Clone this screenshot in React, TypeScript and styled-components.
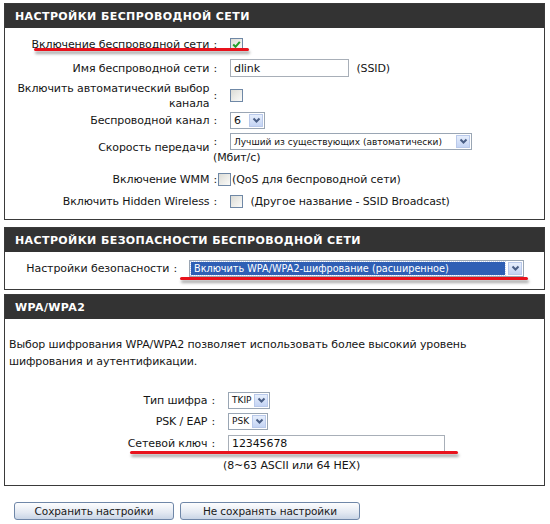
import styled, { createGlobalStyle } from 'styled-components'

const GlobalStyle = createGlobalStyle`
  body {
    margin: 0;
    background: #fff;
    color: #151515;
    font-family: 'DejaVu Sans', Verdana, sans-serif;
    font-size: 11px;
    letter-spacing: -0.1px;
  }
`

const Page = styled.div`
  width: 541px;
  margin: 3px 0 0 4px;
`

const Section = styled.section<{ $gap: number }>`
  border: 1px solid #3a3a3a;
  margin-bottom: ${(p) => p.$gap}px;
`

const SectionTitle = styled.h2`
  margin: 0;
  height: 24px;
  display: flex;
  align-items: center;
  padding-left: 10px;
  background: #333;
  color: #fff;
  font-family: 'DejaVu Sans', Verdana, sans-serif;
  font-size: 11px;
  font-weight: bold;
  letter-spacing: 0.4px;
`

const Body = styled.div<{ $pad: string }>`
  padding: ${(p) => p.$pad};
`

const FieldRow = styled.div<{ $h: number; $label: number; $gap?: number }>`
  position: relative;
  display: grid;
  grid-template-columns: ${(p) => p.$label}px 1fr;
  column-gap: ${(p) => p.$gap ?? 13}px;
  align-items: center;
  height: ${(p) => p.$h}px;
`

const Label = styled.div<{ $top?: number }>`
  display: flex;
  justify-content: flex-end;
  align-items: center;
  align-self: ${(p) => (p.$top !== undefined ? 'start' : 'center')};
  padding-top: ${(p) => p.$top ?? 0}px;
  text-align: right;
  line-height: 15px;
`

const Colon = styled.span<{ $raise?: number }>`
  margin-left: 4px;
  transform: translateY(${(p) => -(p.$raise ?? 0)}px);
`

const Value = styled.div<{ $shift?: number; $column?: boolean; $gap?: number }>`
  display: flex;
  flex-direction: ${(p) => (p.$column ? 'column' : 'row')};
  align-items: ${(p) => (p.$column ? 'flex-start' : 'center')};
  align-self: ${(p) => (p.$column ? 'start' : 'center')};
  padding-top: ${(p) => (p.$column ? 4 : 0)}px;
  margin-left: ${(p) => -(p.$shift ?? 0)}px;
  gap: ${(p) => p.$gap ?? 4}px;
`

const Note = styled.span<{ $shift?: number }>`
  margin-left: ${(p) => -(p.$shift ?? 0)}px;
  line-height: 14px;
`

const Box = styled.span`
  width: 13px;
  height: 13px;
  box-sizing: border-box;
  border: 1px solid #6f88a6;
  background: linear-gradient(135deg, #dcdcd6, #fbfbf9);
  display: inline-flex;
  align-items: center;
  justify-content: center;
  flex-shrink: 0;
`

const TextInput = styled.div<{ $w: number; $h: number }>`
  width: ${(p) => p.$w}px;
  height: ${(p) => p.$h}px;
  box-sizing: border-box;
  border: 1px solid #a8afb8;
  background: #fff;
  padding: 0 3px;
  display: flex;
  align-items: center;
  font-size: 11px;
  color: #111;
`

const SelectBox = styled.div<{ $w: number; $size: number }>`
  width: ${(p) => p.$w}px;
  height: 17px;
  box-sizing: border-box;
  border: 1px solid #9aa6b4;
  background: #fff;
  display: flex;
  align-items: stretch;
  font-size: ${(p) => p.$size}px;
  letter-spacing: 0;
  flex-shrink: 0;
`

const SelectText = styled.span<{ $active?: boolean }>`
  flex: 1;
  display: flex;
  align-items: center;
  padding: 0 3px;
  margin: ${(p) => (p.$active ? '1px 2px 1px 1px' : '0')};
  white-space: nowrap;
  overflow: hidden;
  background: ${(p) => (p.$active ? '#2f5fb5' : 'transparent')};
  color: ${(p) => (p.$active ? '#fff' : '#111')};
  outline: ${(p) => (p.$active ? '1px dotted #c8d4ee' : 'none')};
`

const ArrowButton = styled.span`
  width: 14px;
  margin: 1px;
  box-sizing: border-box;
  border: 1px solid #b9c9ea;
  background: linear-gradient(#e6eefc, #c4d4f4);
  display: flex;
  align-items: center;
  justify-content: center;
`

// red hand-drawn underline laid over a field row
const Mark = styled.span<{ $left: number; $top: number; $width: number }>`
  position: absolute;
  left: ${(p) => p.$left}px;
  top: ${(p) => p.$top}px;
  width: ${(p) => p.$width}px;
  height: 3px;
  border-radius: 2px;
  background: #e8121c;
  box-shadow: 1px 3px 3px rgba(0, 0, 0, 0.35);
  pointer-events: none;
`

const Paragraph = styled.p`
  margin: 0 0 20px;
  line-height: 17px;
`

const Buttons = styled.div`
  display: flex;
  gap: 6px;
  padding: 0 0 0 10px;
`

const Button = styled.button<{ $w: number }>`
  width: ${(p) => p.$w}px;
  height: 18px;
  padding: 0;
  border: 1px solid #6f87a8;
  border-radius: 3px;
  background: linear-gradient(#fdfdfe, #e3e9f2 60%, #c9d5e6);
  font-family: 'DejaVu Sans', Verdana, sans-serif;
  font-size: 10.5px;
  letter-spacing: -0.1px;
  color: #1a1a1a;
`

function Chevron() {
  return (
    <svg width="9" height="7" viewBox="0 0 9 7">
      <polyline points="1.5,1.5 4.5,4.5 7.5,1.5" fill="none" stroke="#4a5f86" strokeWidth="2" />
    </svg>
  )
}

function Select({ w, size, text, active }: { w: number; size: number; text: string; active?: boolean }) {
  return (
    <SelectBox $w={w} $size={size}>
      <SelectText $active={active}>{text}</SelectText>
      <ArrowButton>
        <Chevron />
      </ArrowButton>
    </SelectBox>
  )
}

function Checkbox({ checked }: { checked?: boolean }) {
  return (
    <Box>
      {checked && (
        <svg width="9" height="9" viewBox="0 0 9 9">
          <polyline points="1.2,4.5 3.5,6.8 7.8,1.8" fill="none" stroke="#1f9e2a" strokeWidth="2" />
        </svg>
      )}
    </Box>
  )
}

export default function App() {
  return (
    <Page>
      <GlobalStyle />

      <Section $gap={7}>
        <SectionTitle>НАСТРОЙКИ БЕСПРОВОДНОЙ СЕТИ</SectionTitle>
        <Body $pad="4px 0 7px 0">
          <FieldRow $h={24} $label={212}>
            <Label>
              Включение беспроводной сети<Colon>:</Colon>
            </Label>
            <Value>
              <Checkbox checked />
            </Value>
            <Mark $left={29} $top={16} $width={215} />
          </FieldRow>
          <FieldRow $h={24} $label={212}>
            <Label>
              Имя беспроводной сети<Colon>:</Colon>
            </Label>
            <Value>
              <TextInput $w={119} $h={18}>dlink</TextInput>
              <span>&nbsp;(SSID)</span>
            </Value>
          </FieldRow>
          <FieldRow $h={31} $label={212}>
            <Label>
              <span>
                Включить автоматический выбор
                <br />
                канала
              </span>
              <Colon>:</Colon>
            </Label>
            <Value>
              <Checkbox />
            </Value>
          </FieldRow>
          <FieldRow $h={18} $label={212}>
            <Label>
              Беспроводной канал<Colon>:</Colon>
            </Label>
            <Value>
              <Select w={35} size={11} text="6" />
            </Value>
          </FieldRow>
          <FieldRow $h={39} $label={212}>
            <Label $top={11}>
              Скорость передачи<Colon $raise={6}>:</Colon>
            </Label>
            <Value $column $gap={1}>
              <Select w={242} size={9} text="Лучший из существующих (автоматически)" />
              <Note $shift={17}>(Мбит/с)</Note>
            </Value>
          </FieldRow>
          <FieldRow $h={22} $label={212}>
            <Label>
              Включение WMM<Colon>:</Colon>
            </Label>
            <Value $shift={12} $gap={1}>
              <Checkbox />
              <span>(QoS для беспроводной сети)</span>
            </Value>
          </FieldRow>
          <FieldRow $h={22} $label={212}>
            <Label>
              Включить Hidden Wireless<Colon>:</Colon>
            </Label>
            <Value>
              <Checkbox />
              <span>&nbsp;(Другое название - SSID Broadcast)</span>
            </Value>
          </FieldRow>
        </Body>
      </Section>

      <Section $gap={4}>
        <SectionTitle>НАСТРОЙКИ БЕЗОПАСНОСТИ БЕСПРОВОДНОЙ СЕТИ</SectionTitle>
        <Body $pad="5px 0 10px 0">
          <FieldRow $h={22} $label={172} $gap={12}>
            <Label>
              Настройки безопасности<Colon>:</Colon>
            </Label>
            <Value>
              <Select w={335} size={9.7} text="Включить WPA/WPA2-шифрование (расширенное)" active />
            </Value>
            <Mark $left={175} $top={20} $width={348} />
          </FieldRow>
        </Body>
      </Section>

      <Section $gap={16}>
        <SectionTitle>WPA/WPA2</SectionTitle>
        <Body $pad="17px 4px 8px 4px">
          <Paragraph>
            Выбор шифрования WPA/WPA2 позволяет использовать более высокий уровень
            <br />
            шифрования и аутентификации.
          </Paragraph>
          <FieldRow $h={20} $label={206}>
            <Label>
              Тип шифра<Colon>:</Colon>
            </Label>
            <Value>
              <Select w={42} size={9} text="TKIP" />
            </Value>
          </FieldRow>
          <FieldRow $h={22} $label={206}>
            <Label>
              PSK / EAP<Colon>:</Colon>
            </Label>
            <Value>
              <Select w={40} size={9} text="PSK" />
            </Value>
          </FieldRow>
          <FieldRow $h={23} $label={206}>
            <Label>
              Сетевой ключ<Colon>:</Colon>
            </Label>
            <Value>
              <TextInput $w={217} $h={17}>12345678</TextInput>
            </Value>
            <Mark $left={121} $top={19} $width={328} />
          </FieldRow>
          <FieldRow $h={22} $label={206}>
            <span />
            <Note $shift={5}>(8~63 ASCII или 64 HEX)</Note>
          </FieldRow>
        </Body>
      </Section>

      <Buttons>
        <Button $w={160}>Сохранить настройки</Button>
        <Button $w={180}>Не сохранять настройки</Button>
      </Buttons>
    </Page>
  )
}
